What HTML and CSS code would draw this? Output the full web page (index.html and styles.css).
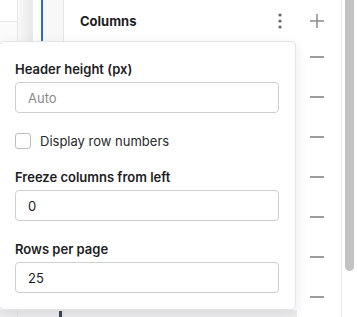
FILE: index.html
```html
<!DOCTYPE html>
<html lang="en">
<head>
  <meta charset="UTF-8" />
  <meta name="viewport" content="width=device-width, initial-scale=1.0" />
  <title>Table settings</title>
  <link rel="stylesheet" href="styles.css">
</head>
<body>
<div class="screen">
  <div class="rail"><div class="rail-top"></div></div>
  <div class="gutter"></div>
  <div class="nav">
    <div class="nav-line"></div>
    <div class="nav-foot"></div>
  </div>

  <!-- ── Columns panel ───────────────────────── -->
  <div class="panel">
    <div class="panel-head">
      <span class="panel-title">Columns</span>
      <svg class="kebab" width="6" height="16" viewBox="0 0 6 16">
        <circle cx="3" cy="2" r="1.6" />
        <circle cx="3" cy="8" r="1.6" />
        <circle cx="3" cy="14" r="1.6" />
      </svg>
    </div>
  </div>

  <div class="actions">
    <div class="act act-plus">
      <svg width="14" height="14" viewBox="0 0 14 14"><path d="M7 0v14M0 7h14" /></svg>
    </div>
    <div class="act"><span class="minus"></span></div>
    <div class="act"><span class="minus"></span></div>
    <div class="act"><span class="minus"></span></div>
    <div class="act"><span class="minus"></span></div>
    <div class="act"><span class="minus"></span></div>
    <div class="act"><span class="minus"></span></div>
    <div class="act"><span class="minus"></span></div>
  </div>

  <div class="scroll"><div class="thumb"></div></div>

  <!-- ── Settings popover ───────────────────────── -->
  <div class="popover">
    <div class="group">
      <label class="lbl">Header height (px)</label>
      <input class="inp" type="text" placeholder="Auto" />
    </div>

    <label class="check">
      <span class="box"></span>
      <span>Display row numbers</span>
    </label>

    <div class="group">
      <label class="lbl">Freeze columns from left</label>
      <input class="inp" type="text" value="0" />
    </div>

    <div class="group">
      <label class="lbl">Rows per page</label>
      <input class="inp" type="text" value="25" />
    </div>
  </div>
</div>
</body>
</html>
```

FILE: styles.css
```css
html,body{margin:0;padding:0;background:#fff;color:#1d1d1f;font-family:Inter,'Liberation Sans',sans-serif;}
.screen{position:relative;display:flex;width:358px;height:317px;overflow:hidden;}

/* bottom band of the page underneath the popover */
.rail,.gutter,.panel{box-shadow:inset 0 -7px 0 #eeeef1;}

.rail{width:17px;border-right:1px solid #e7e7e7;background-color:#fbfbfb;}
.rail-top{height:21px;background:#fff;border-bottom:1px solid #e6e6e6;}
.gutter{width:15px;background:linear-gradient(to right,#f9f9f9,#e8e8e8);}
.nav{width:30px;border-right:1px solid #e6e6e6;display:flex;flex-direction:column;background:linear-gradient(to top,#eeeef1 7px,transparent 7px),linear-gradient(to right,#fff 10px,#f8f8f8 10px);}
.nav-line{width:2px;height:60px;margin-left:8px;background:#2a6ebb;}
.nav-foot{margin-top:auto;height:6px;width:3px;margin-left:26px;background:#3d4854;}

.panel{flex:1;}
.panel-head{display:flex;align-items:center;justify-content:space-between;height:42px;padding:0 14px 0 16px;}
.panel-title{font-size:13px;font-weight:700;}
.kebab{fill:#666;}

.actions{width:40px;padding:5px 4px 0 0;display:flex;flex-direction:column;}
.act{height:40px;display:flex;align-items:center;justify-content:center;}
.act-plus{height:32px;}
.act-plus svg{stroke:#8c8c8c;stroke-width:1.5;fill:none;}
.minus{width:14px;height:2px;background:#9c9c9c;}

.scroll{width:9px;border-left:1px solid #e8e8e8;padding:0 4px 0 3px;}
.thumb{width:9px;height:271px;background:#c3c3c3;border-radius:0 0 5px 5px;}

.popover{position:absolute;left:-1px;top:41px;width:297px;height:269px;box-sizing:border-box;padding:19px 16px 0 15px;
  background:#fff;border:1px solid #e3e3ea;border-radius:5px;box-shadow:0 4px 14px rgba(0,0,0,.09);
  display:flex;flex-direction:column;gap:20px;}
.group{display:flex;flex-direction:column;gap:5px;}
.lbl{font-size:13px;font-weight:600;line-height:16px;color:#1d1d1f;}
.inp{height:31px;box-sizing:border-box;border:1px solid #cfcfcf;border-radius:4px;padding:0 12px;font:13px Inter,'Liberation Sans',sans-serif;color:#1d1d1f;outline:none;}
.inp::placeholder{color:#8a8a8a;}
.check{display:flex;align-items:center;gap:9px;font-size:13px;line-height:16px;color:#2a2a2a;}
.box{width:16px;height:16px;box-sizing:border-box;border:1px solid #bdbdbd;border-radius:3px;}
```
